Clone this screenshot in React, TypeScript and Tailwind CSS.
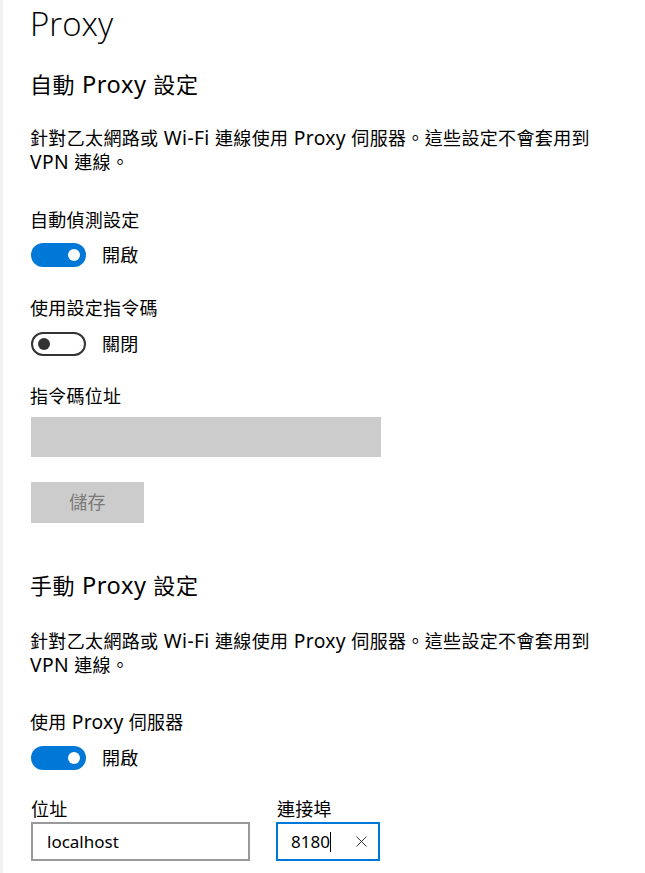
import React from "react";

const M = ({ t }: { t: string }) => {
  const parts = t.split(/([\u0000-\u024F]+)/).filter((p) => p.length > 0);
  return (
    <>
      {parts.map((p, i) =>
        /^[\u0000-\u024F]+$/.test(p) ? (
          <span key={i} className="text-[1.07em]">
            {p}
          </span>
        ) : (
          <span key={i}>{p}</span>
        )
      )}
    </>
  );
};

const Toggle = ({ on }: { on: boolean }) =>
  on ? (
    <div className="w-[55px] h-[24px] rounded-full bg-[#0078d7] flex items-center justify-end pr-[6px] shrink-0">
      <div className="w-[12px] h-[12px] rounded-full bg-white" />
    </div>
  ) : (
    <div className="w-[55px] h-[24px] rounded-full border-2 border-[#333333] flex items-center pl-[5px] shrink-0">
      <div className="w-[12px] h-[12px] rounded-full bg-[#333333]" />
    </div>
  );

const Para = ({ mt }: { mt: string }) => (
  <p className={`${mt} text-[18px] leading-[24px] tracking-[0.35px] whitespace-nowrap`}>
    <M t="針對乙太網路或 Wi-Fi 連線使用 Proxy 伺服器。這些設定不會套用到" />
    <br />
    <M t="VPN 連線。" />
  </p>
);

const Label = ({ t, mt }: { t: string; mt: string }) => (
  <div className={`${mt} text-[18px] leading-[24px] tracking-[0.25px] whitespace-nowrap`}>
    <M t={t} />
  </div>
);

export default function App() {
  return (
    <div className="min-h-[873px] bg-white border-l-[3px] border-[#f2f2f2] pl-[27px] text-black font-['Noto_Sans','Noto_Sans_CJK_TC',sans-serif]">
      <h1 className="h-[48px] text-[33px] leading-[48px] font-light font-['Open_Sans','Noto_Sans_CJK_TC',sans-serif]">
        Proxy
      </h1>

      <h2 className="mt-[20px] text-[22px] leading-[32px] font-normal tracking-[0.6px] whitespace-nowrap">
        <M t="自動 Proxy 設定" />
      </h2>
      <Para mt="mt-[26px]" />

      <Label mt="mt-[34px]" t="自動偵測設定" />
      <div className="mt-[11px] flex items-center gap-[16px] pl-[1px]">
        <Toggle on />
        <span className="text-[18px] leading-[24px] tracking-[0.25px]">開啟</span>
      </div>

      <Label mt="mt-[29px]" t="使用設定指令碼" />
      <div className="mt-[12px] flex items-center gap-[16px] pl-[1px]">
        <Toggle on={false} />
        <span className="text-[18px] leading-[24px] tracking-[0.25px]">關閉</span>
      </div>

      <Label mt="mt-[28px]" t="指令碼位址" />
      <div className="mt-[9px] ml-[1px] w-[350px] h-[40px] bg-[#cccccc]" />

      <div className="mt-[25px] ml-[1px] w-[113px] h-[41px] bg-[#cccccc] flex items-center justify-center text-[18px] text-[#7a7a7a] tracking-[0.25px]">
        儲存
      </div>

      <h2 className="mt-[46px] text-[22px] leading-[32px] font-normal tracking-[0.6px] whitespace-nowrap">
        <M t="手動 Proxy 設定" />
      </h2>
      <Para mt="mt-[28px]" />

      <Label mt="mt-[33px]" t="使用 Proxy 伺服器" />
      <div className="mt-[12px] flex items-center gap-[16px] pl-[1px]">
        <Toggle on />
        <span className="text-[18px] leading-[24px] tracking-[0.25px]">開啟</span>
      </div>

      <div className="mt-[27px] flex pl-[1px]">
        <div className="w-[245px] flex flex-col">
          <div className="text-[18px] leading-[24px] tracking-[0.25px]">位址</div>
          <div className="mt-[1px] w-[219px] h-[39px] border-2 border-[#999999] flex items-center pl-[14px] text-[17px]">
            localhost
          </div>
        </div>
        <div className="flex flex-col">
          <div className="text-[18px] leading-[24px] tracking-[0.25px] pl-[1px]">連接埠</div>
          <div className="mt-[1px] w-[104px] h-[39px] border-2 border-[#0078d7] flex items-center pl-[13px] pr-[11px] text-[17px]">
            <span>8180</span>
            <span className="w-[1px] h-[20px] bg-black" />
            <span className="flex-1" />
            <svg width="11" height="11" viewBox="0 0 11 11" className="shrink-0">
              <path d="M0.5 0.5 L10.5 10.5 M10.5 0.5 L0.5 10.5" stroke="#333" strokeWidth="1" fill="none" />
            </svg>
          </div>
        </div>
      </div>
    </div>
  );
}
